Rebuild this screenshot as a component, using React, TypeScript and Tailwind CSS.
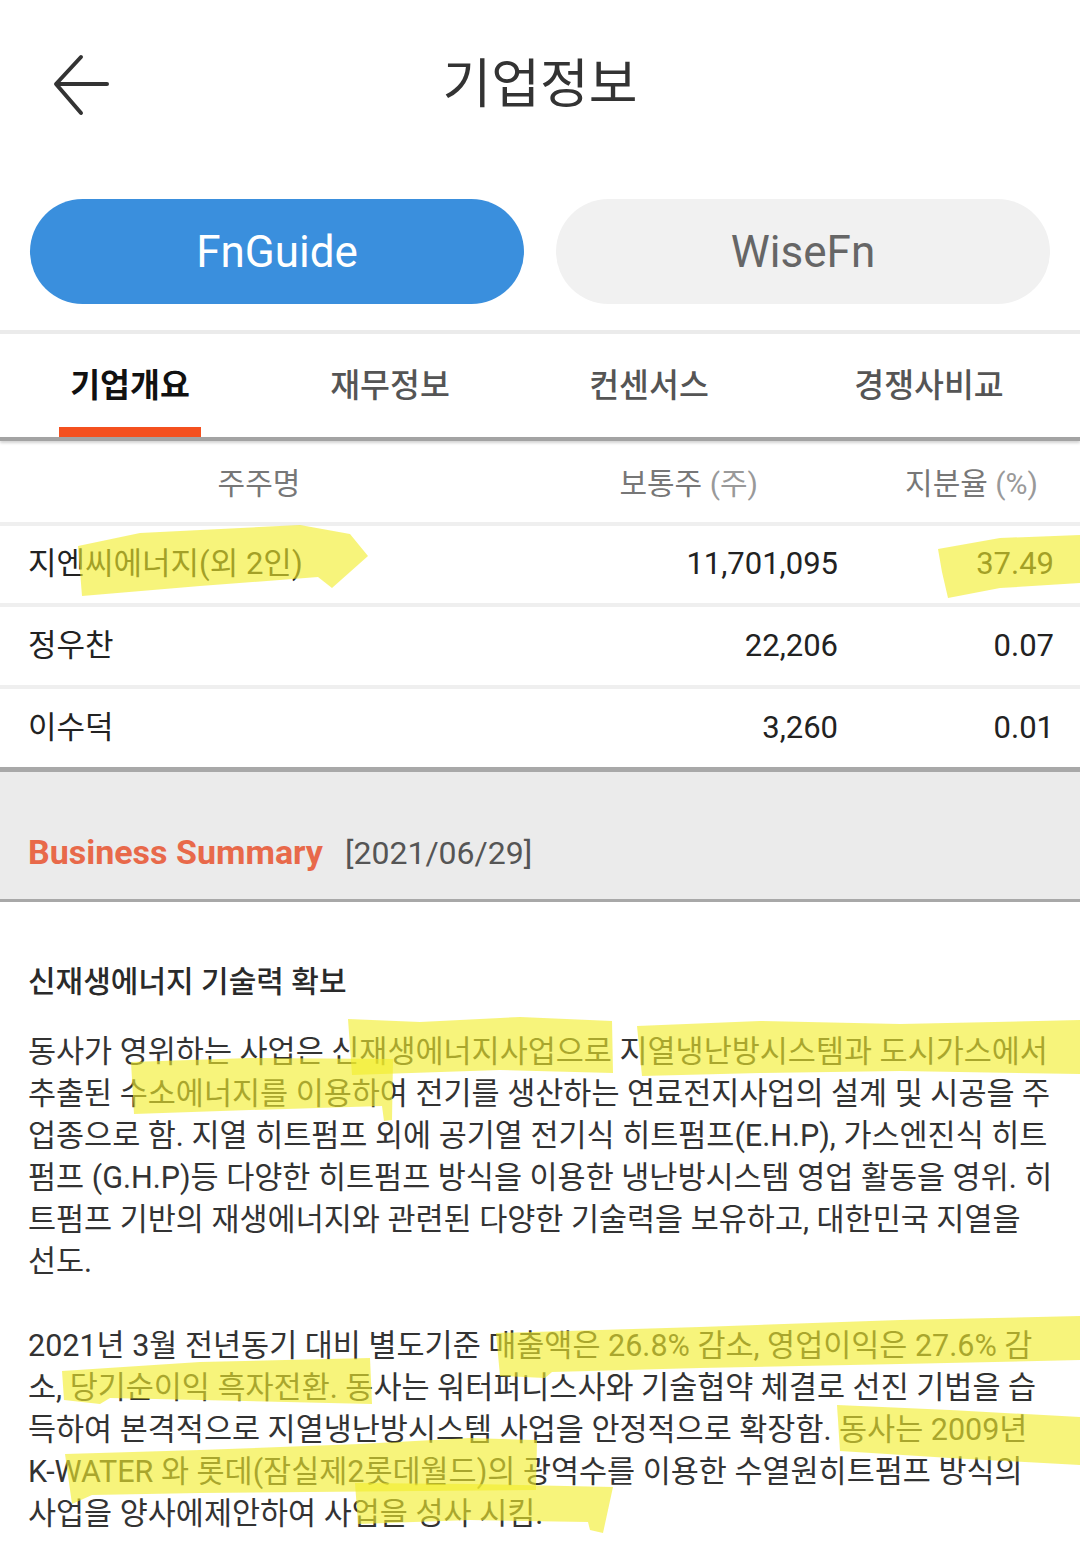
import React from 'react';

const FONT = "Roboto, 'Noto Sans CJK KR', 'Noto Sans', sans-serif";

const shareholders = [
  { name: '지엔씨에너지(외 2인)', shares: '11,701,095', pct: '37.49' },
  { name: '정우찬', shares: '22,206', pct: '0.07' },
  { name: '이수덕', shares: '3,260', pct: '0.01' },
];

const para1 = [
  '동사가 영위하는 사업은 신재생에너지사업으로 지열냉난방시스템과 도시가스에서',
  '추출된 수소에너지를 이용하여 전기를 생산하는 연료전지사업의 설계 및 시공을 주',
  '업종으로 함. 지열 히트펌프 외에 공기열 전기식 히트펌프(E.H.P), 가스엔진식 히트',
  '펌프 (G.H.P)등 다양한 히트펌프 방식을 이용한 냉난방시스템 영업 활동을 영위. 히',
  '트펌프 기반의 재생에너지와 관련된 다양한 기술력을 보유하고, 대한민국 지열을',
  '선도.',
];

const para2 = [
  '2021년 3월 전년동기 대비 별도기준 매출액은 26.8% 감소, 영업이익은 27.6% 감',
  '소, 당기순이익 흑자전환. 동사는 워터퍼니스사와 기술협약 체결로 선진 기법을 습',
  '득하여 본격적으로 지열냉난방시스템 사업을 안정적으로 확장함. 동사는 2009년',
  'K-WATER 와 롯데(잠실제2롯데월드)의 광역수를 이용한 수열원히트펌프 방식의',
  '사업을 양사에제안하여 사업을 성사 시킴.',
];

// freehand highlighter strokes drawn over the page
const marks = [
  'M78 546 L140 533 L300 525 L350 534 L368 556 L332 588 L318 577 L200 586 L82 596 Z',
  'M938 549 L1000 538 L1080 535 L1080 583 L1000 588 L948 598 L942 572 Z',
  'M348 1019 L420 1022 L520 1017 L612 1021 L613 1073 L500 1070 L352 1075 Z',
  'M637 1026 L760 1021 L900 1024 L1080 1020 L1080 1074 L900 1071 L760 1073 L642 1076 Z',
  'M131 1062 L250 1058 L393 1059 L392 1120 L384 1121 L382 1106 L250 1110 L134 1114 Z',
  'M496 1333 L700 1327 L900 1320 L1080 1316 L1080 1360 L900 1364 L700 1368 L552 1372 L545 1378 L500 1376 Z',
  'M62 1371 L200 1362 L370 1358 L372 1404 L200 1400 L110 1398 L100 1404 L64 1400 Z',
  'M837 1405 L950 1410 L1080 1417 L1080 1465 L950 1458 L840 1451 Z',
  'M65 1454 L200 1450 L360 1444 L470 1438 L537 1440 L536 1490 L420 1491 L200 1493 L92 1495 L72 1504 Z',
  'M355 1483 L470 1484 L613 1487 L603 1533 L590 1530 L588 1522 L470 1520 L358 1524 Z',
];

function BackArrow() {
  return (
    <svg width="60" height="66" viewBox="0 0 60 66" fill="none" stroke="#333" strokeWidth="4" strokeLinecap="round" strokeLinejoin="round">
      <path d="M56 31 H6" />
      <path d="M30 4 L5 31 L30 60" />
    </svg>
  );
}

export default function App() {
  return (
    <div className="relative w-[1080px] min-h-[1556px] bg-white overflow-hidden" style={{ fontFamily: FONT }}>
      {/* header */}
      <div className="h-[165px] grid grid-cols-[1fr_auto_1fr] items-center">
        <div className="pl-[51px] pt-[6px]">
          <BackArrow />
        </div>
        <div className="text-[53px] text-[#333] leading-none pt-[6px]">기업정보</div>
        <div />
      </div>

      {/* source pills */}
      <div className="flex gap-[32px] px-[30px] pt-[34px] pb-[26px]">
        <div className="flex-1 h-[105px] rounded-full bg-[#3a8fdd] flex items-center justify-center text-white text-[44px]">
          FnGuide
        </div>
        <div className="flex-1 h-[105px] rounded-full bg-[#f1f1f1] flex items-center justify-center text-[#666] text-[44px]">
          WiseFn
        </div>
      </div>
      <div className="h-[4px] bg-[#ebebeb]" />

      {/* tabs */}
      <div className="flex h-[103px]">
        {[
          { label: '기업개요', w: 'w-[260px]', active: true },
          { label: '재무정보', w: 'w-[260px]', active: false },
          { label: '컨센서스', w: 'w-[258px]', active: false },
          { label: '경쟁사비교', w: 'flex-1', active: false },
        ].map((t) => (
          <div key={t.label} className={`${t.w} flex flex-col items-center`}>
            <div
              className={`h-[93px] pt-[12px] flex items-center text-[32.5px] ${
                t.active ? 'font-bold text-[#111]' : 'font-medium text-[#555]'
              }`}
            >
              {t.label}
            </div>
            <div className={`h-[10px] w-[142px] ${t.active ? 'bg-[#f4501f]' : ''}`} />
          </div>
        ))}
      </div>
      <div className="h-[4px] bg-[#a3a3a3] shadow-[0_2px_3px_rgba(0,0,0,0.18)]" />

      {/* shareholder table */}
      <div className="h-[81px] pt-[3px] flex items-center text-[30px] text-[#777]">
        <div className="w-[518px] text-center">주주명</div>
        <div className="w-[240px] text-right">
          보통주 <span className="text-[#999]">(주)</span>
        </div>
        <div className="flex-1 text-right pr-[42px]">
          지분율 <span className="text-[#999]">(%)</span>
        </div>
      </div>
      {shareholders.map((s, i) => (
        <div key={s.name}>
          <div className="h-[4px] bg-[#efefef]" />
          <div className={`${i === 0 ? 'h-[77px]' : 'h-[78px]'} flex items-center text-[31px] text-[#222]`}>
            <div className="w-[518px] pl-[28px]">{s.name}</div>
            <div className="w-[320px] text-right">{s.shares}</div>
            <div className="flex-1 text-right pr-[26px]">{s.pct}</div>
          </div>
        </div>
      ))}
      <div className="h-[5px] bg-[#a8a8a8] shadow-[0_2px_3px_rgba(0,0,0,0.15)]" />

      {/* business summary bar */}
      <div className="h-[127px] bg-[#ebebeb] pt-[34px] px-[28px] flex items-center gap-[22px]">
        <span className="text-[34px] font-bold text-[#e8694a]">Business Summary</span>
        <span className="text-[32px] text-[#555]">[2021/06/29]</span>
      </div>
      <div className="h-[3px] bg-[#a8a8a8]" />

      {/* summary text */}
      <div className="px-[28px] pt-[59px] pb-[20px] text-[#333]">
        <div className="text-[30px] font-medium leading-[42px] text-[#2a2a2a]">신재생에너지 기술력 확보</div>
        <div className="mt-[28px] text-[30.5px] leading-[42px]">
          {para1.map((l) => (
            <div key={l} className="whitespace-nowrap">{l}</div>
          ))}
        </div>
        <div className="mt-[42px] text-[30.5px] leading-[42px]">
          {para2.map((l) => (
            <div key={l} className="whitespace-nowrap">{l}</div>
          ))}
        </div>
      </div>

      {/* highlighter overlay */}
      <svg
        className="absolute inset-0 pointer-events-none"
        width="1080"
        height="1556"
        viewBox="0 0 1080 1556"
      >
        {marks.map((d, i) => (
          <path key={i} d={d} fill="#f2ee2a" fillOpacity="0.62" strokeLinejoin="round" />
        ))}
      </svg>
    </div>
  );
}
